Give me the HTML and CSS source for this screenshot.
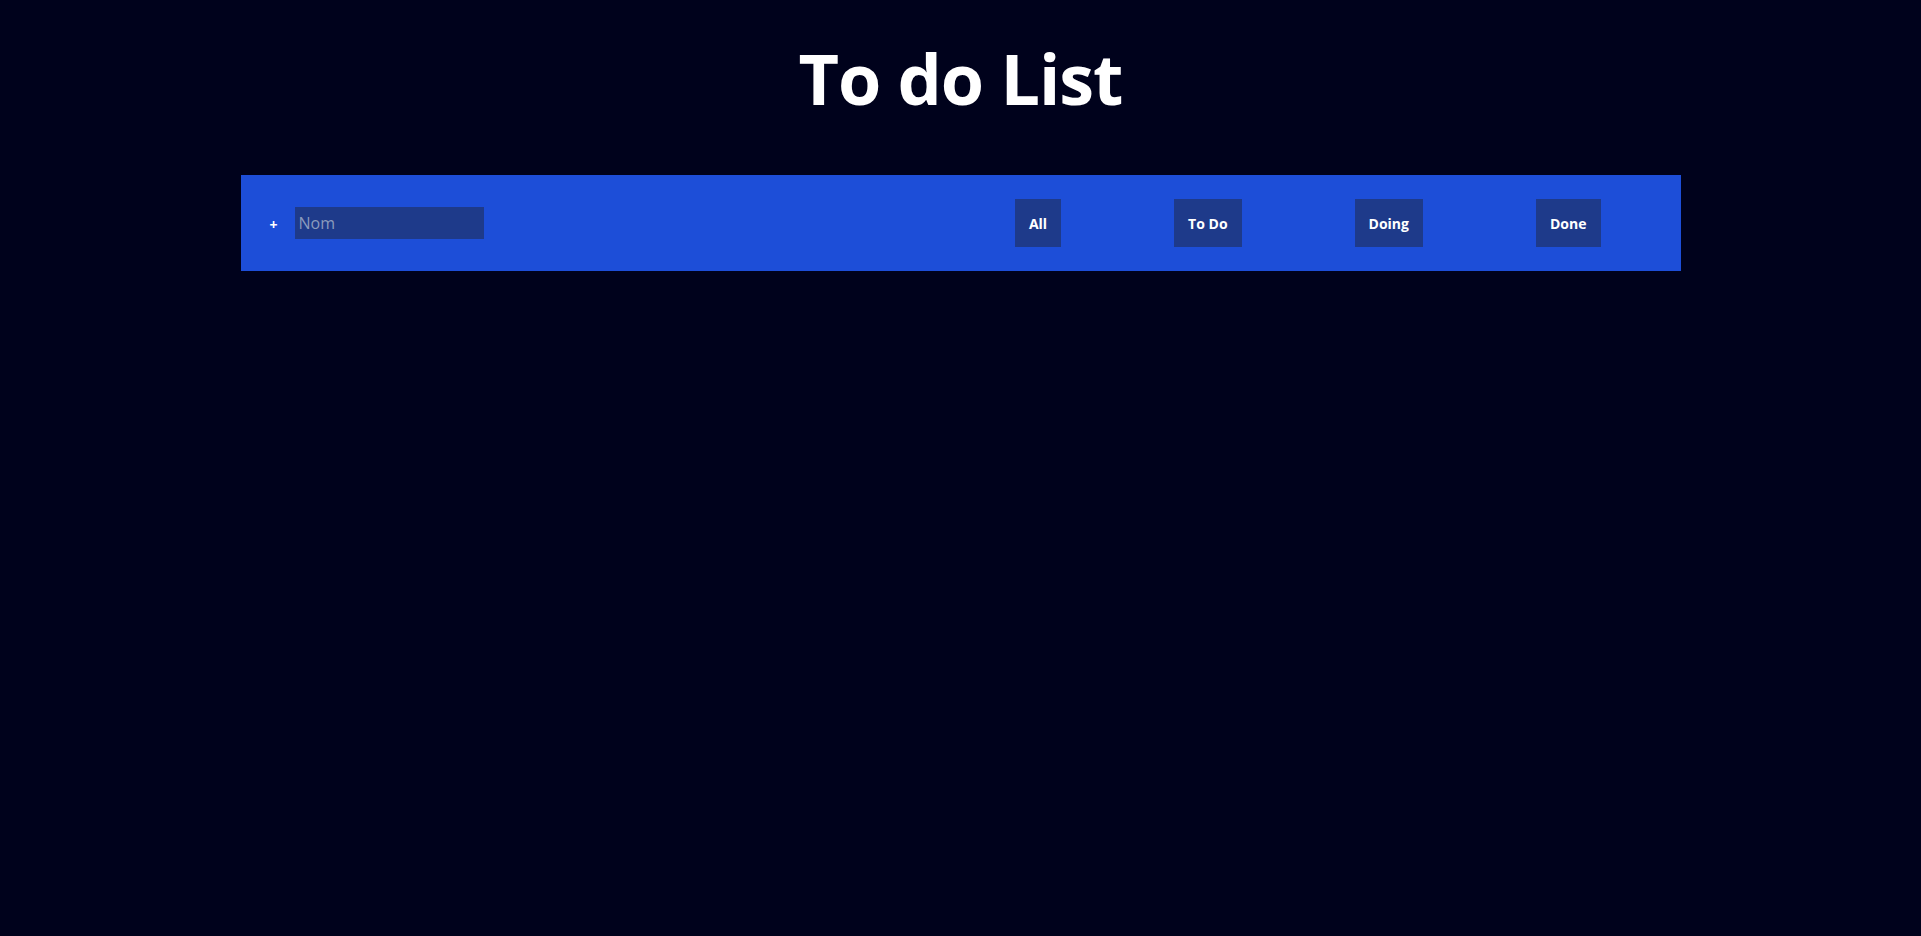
FILE: index.html
```html
<!DOCTYPE html>
<html lang="fr">
<head>
<meta charset="utf-8">
<title>To do List</title>
<link rel="stylesheet" href="styles.css">
</head>
<body>
<main class="page">
  <h1 class="title">To do List</h1>
  <section class="bar">
    <div class="add">
      <button class="plus" type="button">+</button>
      <input class="name" type="text" placeholder="Nom">
    </div>
    <div class="filters">
      <button class="filter" type="button">All</button>
      <button class="filter" type="button">To Do</button>
      <button class="filter" type="button">Doing</button>
      <button class="filter" type="button">Done</button>
    </div>
  </section>
</main>
</body>
</html>
```

FILE: styles.css
```css
html, body {
  margin: 0;
  padding: 0;
  height: 100%;
  background: #00021c;
}
body {
  font-family: "Open Sans", "Noto Sans", sans-serif;
  color: #ffffff;
}
.page {
  display: flex;
  flex-direction: column;
  align-items: center;
}
.title {
  margin: 28px 0 0 0;
  height: 147px;
  font-size: 70px;
  line-height: 100px;
  font-weight: 700;
  letter-spacing: -1px;
}
.bar {
  width: 1440px;
  height: 96px;
  box-sizing: border-box;
  background: #1d4ed8;
  display: flex;
  align-items: center;
  justify-content: space-between;
  padding: 0 80px 0 22px;
}
.add {
  display: flex;
  align-items: center;
  gap: 10px;
}
.plus {
  background: transparent;
  border: 0;
  color: #ffffff;
  font-family: inherit;
  font-weight: 700;
  font-size: 14px;
  padding: 2px 7px 0 7px;
  cursor: pointer;
}
.name {
  width: 189px;
  height: 32px;
  box-sizing: border-box;
  background: #1e3a8a;
  border: 0;
  outline: none;
  color: #ffffff;
  font-family: inherit;
  font-size: 16px;
  padding: 0 4px;
}
.name::placeholder {
  color: #8b9bbd;
}
.filters {
  display: flex;
  gap: 113px;
}
.filter {
  height: 48px;
  background: #1e3a8a;
  border: 0;
  color: #ffffff;
  font-family: inherit;
  font-weight: 700;
  font-size: 14px;
  padding: 0 14px;
  cursor: pointer;
}
```
